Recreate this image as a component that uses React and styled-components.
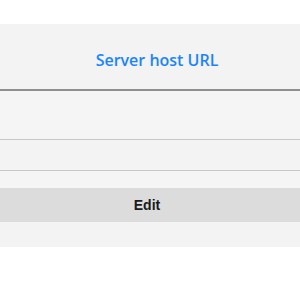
import React from "react";
import styled, { createGlobalStyle } from "styled-components";

const Global = createGlobalStyle`
  html, body { margin: 0; padding: 0; background: #ffffff; }
  body { font-family: "Open Sans", "Liberation Sans", sans-serif; }
`;

const Page = styled.div`
  padding-top: 24px;
  display: flex;
  flex-direction: column;
`;

const Header = styled.header`
  height: 59px;
  padding-top: 6px;
  padding-left: 14px;
  background: #f3f3f3;
  border-bottom: 2px solid #8f8f8f;
  display: flex;
  align-items: center;
  justify-content: center;
`;

const Title = styled.h1`
  margin: 0;
  font-family: "Open Sans", sans-serif;
  font-weight: 600;
  font-size: 16px;
  color: #1a84ff;
`;

const Row = styled.div`
  height: ${(p) => p.$h}px;
  background: ${(p) => p.$bg};
  border-bottom: ${(p) => (p.$line ? "1px solid #c8c8c8" : "none")};
`;

const EditButton = styled.button`
  height: 34px;
  border: none;
  margin: 0;
  padding: 0 6px 0 0;
  background: #dcdcdc;
  font-family: "Liberation Sans", Arial, sans-serif;
  font-weight: 700;
  font-size: 14px;
  color: #1a1a1a;
  display: flex;
  align-items: center;
  justify-content: center;
  width: 100%;
`;

const Footer = styled.div`
  height: 25px;
  background: #f3f3f3;
`;

export default function App() {
  return (
    <>
      <Global />
      <Page>
        <Header>
          <Title>Server host URL</Title>
        </Header>
        <Row $h={48} $bg="#f5f5f5" $line />
        <Row $h={30} $bg="#f3f3f3" $line />
        <Row $h={17} $bg="#f5f5f5" />
        <EditButton>Edit</EditButton>
        <Footer />
      </Page>
    </>
  );
}
